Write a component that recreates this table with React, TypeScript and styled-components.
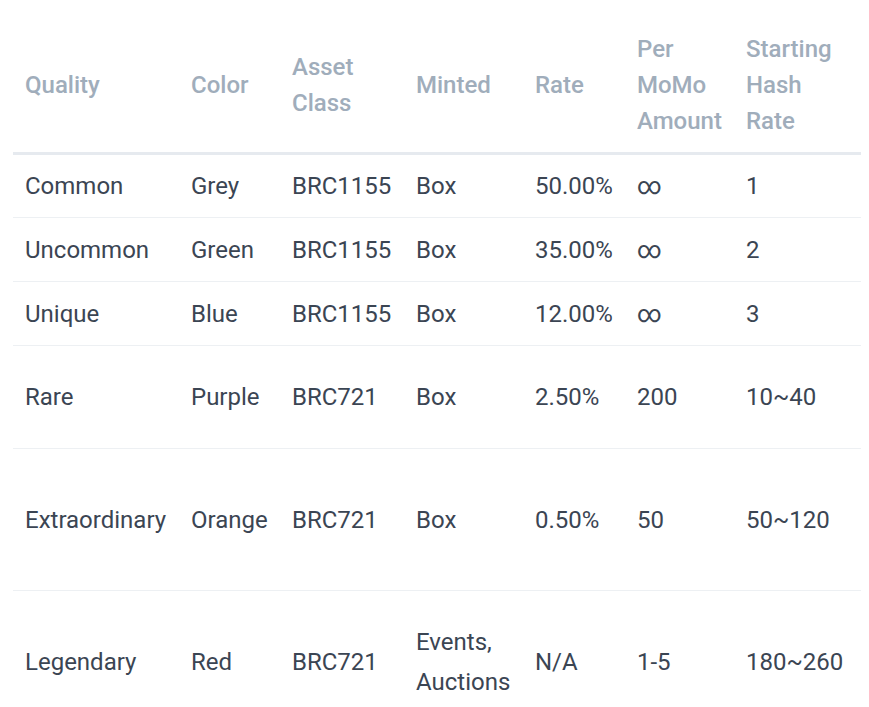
import styled, { createGlobalStyle } from 'styled-components';

const GlobalStyle = createGlobalStyle`
  html, body {
    margin: 0;
    padding: 0;
    background: #ffffff;
  }
  body {
    font-family: Roboto, "Noto Sans", "Liberation Sans", sans-serif;
  }
`;

type Tier = {
  quality: string;
  color: string;
  assetClass: string;
  minted: string;
  rate: string;
  amount: string;
  hashRate: string;
  height: number;
};

const tiers: Tier[] = [
  { quality: 'Common', color: 'Grey', assetClass: 'BRC1155', minted: 'Box', rate: '50.00%', amount: '∞', hashRate: '1', height: 64 },
  { quality: 'Uncommon', color: 'Green', assetClass: 'BRC1155', minted: 'Box', rate: '35.00%', amount: '∞', hashRate: '2', height: 64 },
  { quality: 'Unique', color: 'Blue', assetClass: 'BRC1155', minted: 'Box', rate: '12.00%', amount: '∞', hashRate: '3', height: 64 },
  { quality: 'Rare', color: 'Purple', assetClass: 'BRC721', minted: 'Box', rate: '2.50%', amount: '200', hashRate: '10~40', height: 103 },
  { quality: 'Extraordinary', color: 'Orange', assetClass: 'BRC721', minted: 'Box', rate: '0.50%', amount: '50', hashRate: '50~120', height: 142 },
  { quality: 'Legendary', color: 'Red', assetClass: 'BRC721', minted: 'Events, Auctions', rate: 'N/A', amount: '1-5', hashRate: '180~260', height: 142 },
];

const columns = [
  { label: 'Quality', width: 166 },
  { label: 'Color', width: 101 },
  { label: 'Asset Class', width: 124 },
  { label: 'Minted', width: 119 },
  { label: 'Rate', width: 102 },
  { label: 'Per MoMo Amount', width: 109 },
  { label: 'Starting Hash Rate', width: 127 },
];

const App = () => {
  return (
    <>
      <GlobalStyle />
      <Wrapper>
        <Table>
          <colgroup>
            {columns.map((c) => (
              <Col key={c.label} $width={c.width} />
            ))}
          </colgroup>
          <thead>
            <tr>
              {columns.map((c) => (
                <Th key={c.label}>{c.label}</Th>
              ))}
            </tr>
          </thead>
          <tbody>
            {tiers.map((t) => (
              <Row key={t.quality}>
                <Td $height={t.height}>{t.quality}</Td>
                <Td $height={t.height}>{t.color}</Td>
                <Td $height={t.height}>{t.assetClass}</Td>
                <Td $height={t.height}>{t.minted}</Td>
                <Td $height={t.height}>{t.rate}</Td>
                <Td $height={t.height}>{t.amount}</Td>
                <Td $height={t.height}>{t.hashRate}</Td>
              </Row>
            ))}
          </tbody>
        </Table>
      </Wrapper>
    </>
  );
};

export default App;

const Wrapper = styled.div`
  padding: 19px 8px 0 13px;
`;

const Table = styled.table`
  width: 848px;
  table-layout: fixed;
  border-collapse: collapse;
  border-spacing: 0;
`;

const Col = styled.col<{ $width: number }>`
  width: ${(p) => p.$width}px;
`;

const Th = styled.th`
  padding: 12px 12px 13px;
  text-align: left;
  vertical-align: middle;
  font-size: 24px;
  line-height: 36px;
  font-weight: 500;
  color: #a0adbb;
  border-bottom: 3px solid #e6eaef;
`;

const Row = styled.tr`
  border-bottom: 1px solid #edf0f3;
`;

const Td = styled.td<{ $height: number }>`
  box-sizing: border-box;
  height: ${(p) => p.$height}px;
  padding: 0 12px;
  vertical-align: middle;
  font-size: 24px;
  line-height: 40px;
  font-weight: 400;
  color: #3b4553;
`;
